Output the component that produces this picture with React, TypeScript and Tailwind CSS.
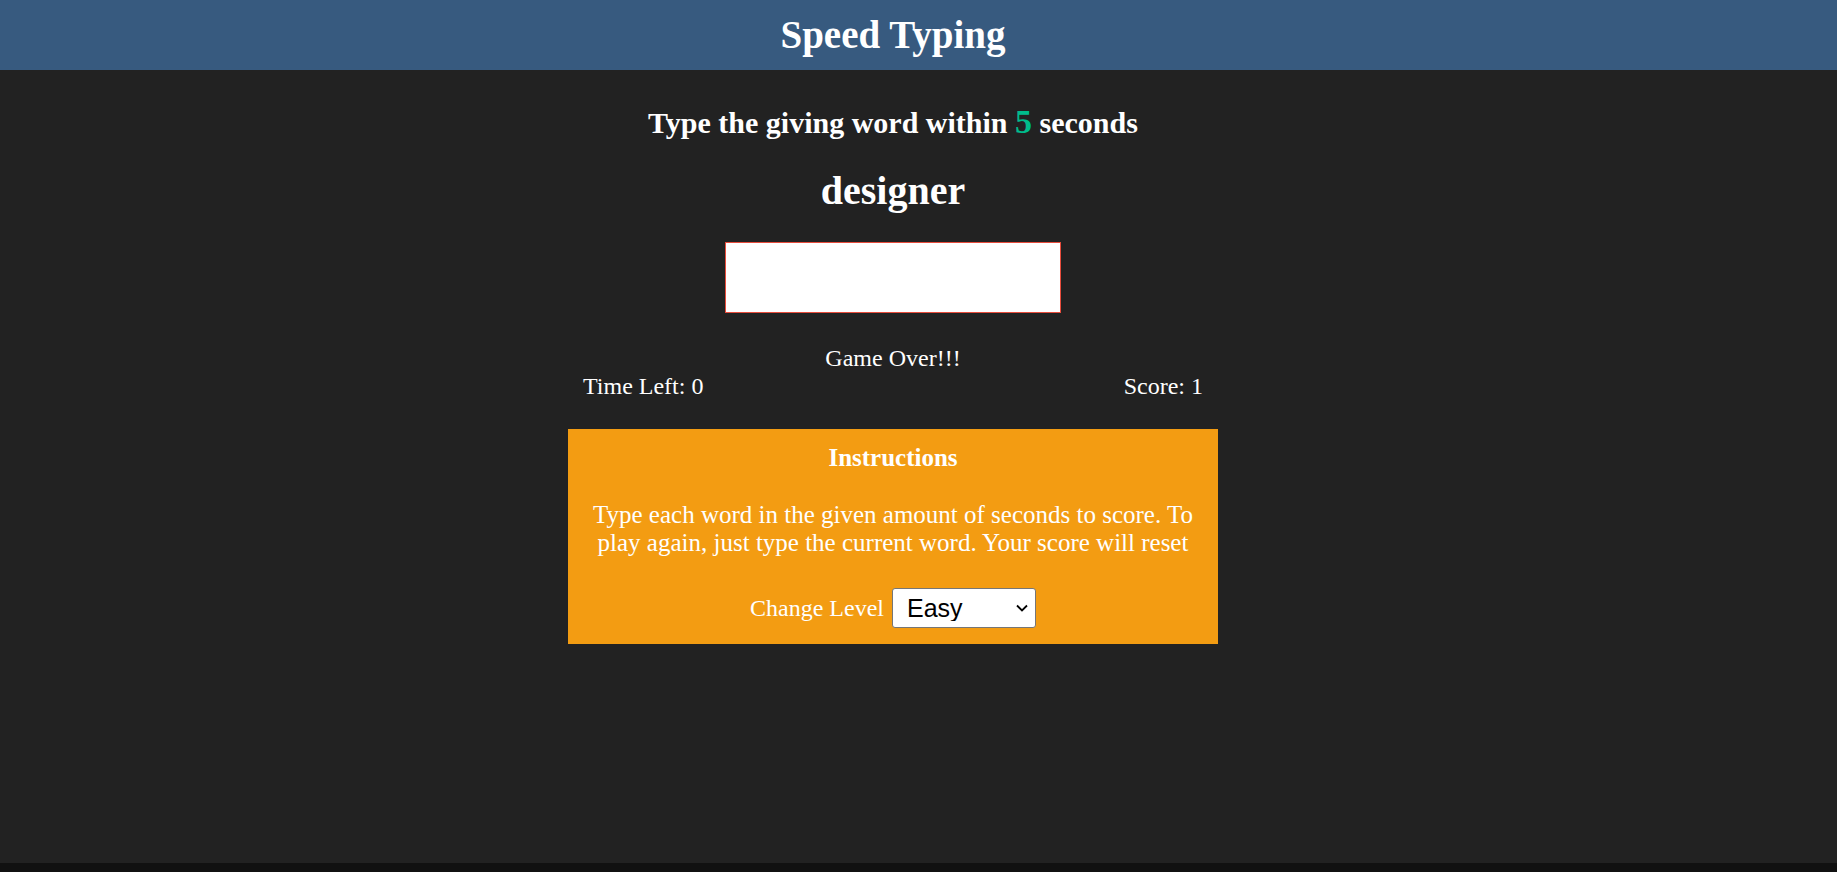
import { useState } from "react";

const serif = "font-['Liberation_Serif','Times_New_Roman',serif]";

export default function App() {
  const [word, setWord] = useState("");
  const [level, setLevel] = useState("easy");

  return (
    <div className={`min-h-[872px] bg-[#111] text-white ${serif}`}>
      <div className="h-[863px] bg-[#222]">
        {/* Header */}
        <header className="h-[70px] bg-[#375a7f]">
          <div className="w-[1786px] text-center">
            <h1 className="text-[39px] font-bold leading-[70px]">Speed Typing</h1>
          </div>
        </header>

        {/* Game */}
        <main className="w-[1786px] flex flex-col items-center">
          <p className="mt-[33px] text-[30px] font-bold leading-[40px]">
            Type the giving word within{" "}
            <span className="text-[34px] font-bold leading-none text-[#00bc8c]">5</span>{" "}
            seconds
          </p>

          <h2 className="mt-[24px] text-[40px] font-bold leading-[48px]">designer</h2>

          <input
            type="text"
            value={word}
            onChange={(e) => setWord(e.target.value)}
            className="mt-[27px] w-[336px] h-[71px] bg-white border border-[#e74c3c] text-black text-2xl px-3 outline-none"
          />

          <p className="mt-[31px] text-[24px] leading-[28px]">Game Over!!!</p>
          <div className="w-[650px] flex justify-between px-[15px] text-[24px] leading-[28px]">
            <span>Time Left: 0</span>
            <span>Score: 1</span>
          </div>

          {/* Instructions */}
          <div className="mt-[29px] w-[650px] bg-[#f39c12] px-[16px] pt-[14px] pb-[16px] text-center">
            <h5 className="text-[25px] font-bold leading-[30px]">Instructions</h5>
            <p className="mt-[28px] text-[25px] leading-[28px]">
              Type each word in the given amount of seconds to score. To play again, just type the current word. Your score will reset
            </p>
            <div className="mt-[31px] flex items-center justify-center gap-[8px]">
              <span className="text-[24px] leading-[28px]">Change Level</span>
              <div className="relative">
                <select
                  value={level}
                  onChange={(e) => setLevel(e.target.value)}
                  className="appearance-none w-[144px] h-[40px] bg-white border border-[#767676] rounded-[3px] pl-[14px] text-black text-[25px] font-['Liberation_Sans',Arial,sans-serif] leading-none outline-none"
                >
                  <option value="easy">Easy</option>
                  <option value="medium">Medium</option>
                  <option value="hard">Hard</option>
                </select>
                <svg
                  className="pointer-events-none absolute right-[8px] top-[16px]"
                  width="12"
                  height="8"
                  viewBox="0 0 12 8"
                  fill="none"
                >
                  <path d="M1 1.5l5 5 5-5" stroke="#000" strokeWidth="1.8" />
                </svg>
              </div>
            </div>
          </div>
        </main>
      </div>
    </div>
  );
}
